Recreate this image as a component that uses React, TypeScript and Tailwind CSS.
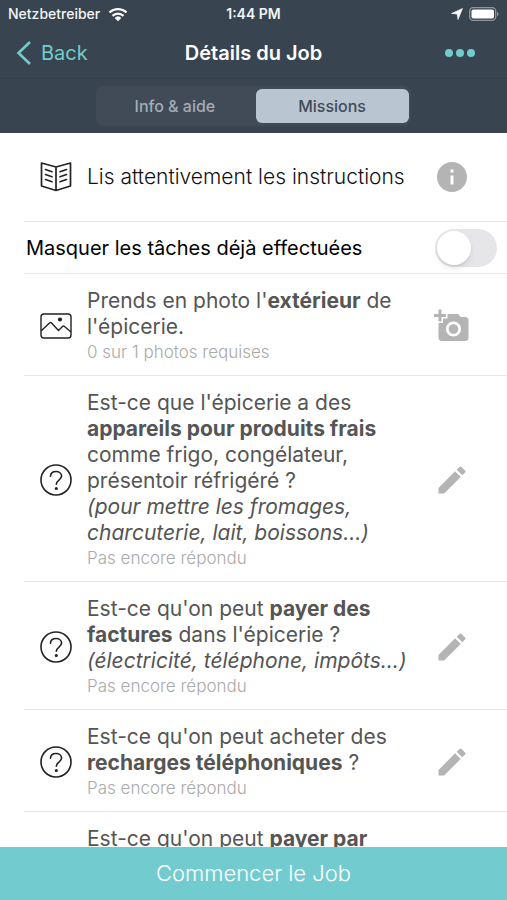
import React, { useState } from 'react';
import { MdAddAPhoto, MdEdit, MdInfo } from 'react-icons/md';

type Mission = {
  id: string;
  kind: 'photo' | 'question';
  text: React.ReactNode;
  status: string;
};

const missions: Mission[] = [
  {
    id: 'exterior',
    kind: 'photo',
    text: (
      <>
        Prends en photo l'<b>extérieur</b> de<br />
        l'épicerie.
      </>
    ),
    status: '0 sur 1 photos requises',
  },
  {
    id: 'fresh',
    kind: 'question',
    text: (
      <>
        Est-ce que l'épicerie a des<br />
        <b>appareils pour produits frais</b><br />
        comme frigo, congélateur,<br />
        présentoir réfrigéré ?<br />
        <i>(pour mettre les fromages,<br />charcuterie, lait, boissons...)</i>
      </>
    ),
    status: 'Pas encore répondu',
  },
  {
    id: 'bills',
    kind: 'question',
    text: (
      <>
        Est-ce qu'on peut <b>payer des<br />factures</b> dans l'épicerie ?<br />
        <i>(électricité, téléphone, impôts...)</i>
      </>
    ),
    status: 'Pas encore répondu',
  },
  {
    id: 'topup',
    kind: 'question',
    text: (
      <>
        Est-ce qu'on peut acheter des<br />
        <b>recharges téléphoniques</b> ?
      </>
    ),
    status: 'Pas encore répondu',
  },
  {
    id: 'card',
    kind: 'question',
    text: (
      <>
        Est-ce qu'on peut <b>payer par<br />carte</b> dans l'épicerie ?<br />
        <i>(crédit, débit...)</i>
      </>
    ),
    status: 'Pas encore répondu',
  },
];

const BookIcon = () => (
  <svg viewBox="0 0 32 32" className="size-8" fill="none" stroke="#222" strokeWidth="1.7" strokeLinecap="round" strokeLinejoin="round" aria-hidden="true">
    <path d="M16 6 1.500 2v23L16 29.500 30.500 25V2L16 6v23" />
    <path d="m5.500 8.500 6.500 2.200M5.500 13.500l6.500 2.200M5.500 18.500l6.500 2.200M26.500 8.500 20 10.700M26.500 13.500 20 15.700M26.500 18.500 20 20.700" />
  </svg>
);

const PictureIcon = () => (
  <svg viewBox="0 0 32 32" className="size-8" fill="none" stroke="#222" strokeWidth="1.4" strokeLinejoin="round" aria-hidden="true">
    <rect x="1" y="4" width="30" height="24" rx="3" />
    <path d="m1 21 8.500-8q1-1 2 0l7 7.500 4-4q1-1 2 0l6.500 5.500" />
    <circle cx="20" cy="9.500" r="1.400" fill="#222" />
  </svg>
);

const QuestionIcon = () => (
  <svg viewBox="0 0 32 32" className="size-8" fill="none" stroke="#222" strokeWidth="1.6" strokeLinecap="round" aria-hidden="true">
    <circle cx="16" cy="16" r="15" />
    <path d="M10.500 12.200c.2-2.900 2.500-4.700 5.500-4.700s5.600 1.900 5.600 4.600c0 3.900-5.300 4-5.300 8.200" />
    <circle cx="16.300" cy="24.500" r=".8" fill="#222" />
  </svg>
);

const StatusBar = () => (
  <div className="grid h-7 grid-cols-3 items-center px-2 text-sm text-gray-100">
    <div className="flex items-center gap-2">
      <span className="font-medium">Netzbetreiber</span>
      <svg viewBox="0 0 20 15" className="h-[15px] w-5 shrink-0" aria-hidden="true">
        <path d="M1.500 5.500a12.200 12.200 0 0 1 17 0M4.500 8.800a8 8 0 0 1 11 0" fill="none" stroke="#fff" strokeWidth="2.300" />
        <path d="M10 14.200 6.700 10.900a4.800 4.800 0 0 1 6.600 0Z" fill="#fff" />
      </svg>
    </div>
    <span className="text-center font-semibold">1:44 PM</span>
    <div className="flex items-center justify-end gap-1.5">
      <svg viewBox="0 0 12 12" className="size-3" fill="#fff" stroke="#fff" strokeWidth=".6" strokeLinejoin="round" aria-hidden="true">
        <path d="M11.500.5 7 11.500 6.200 6 .5 5.500Z" />
      </svg>
      <svg viewBox="0 0 30 14" className="h-3.5 w-[30px]" aria-hidden="true">
        <rect x=".7" y=".7" width="26" height="12.600" rx="3.500" fill="none" stroke="#8d969e" strokeWidth="1.300" />
        <rect x="2.500" y="2.500" width="22.500" height="9" rx="1.800" fill="#fff" />
        <path d="M28 4.800c2 .7 2 3.700 0 4.400Z" fill="#8d969e" />
      </svg>
    </div>
  </div>
);

const MissionRow: React.FC<{ mission: Mission }> = ({ mission }) => (
  <li className="ml-6 flex items-center border-b border-gray-200 pt-3.5 pb-[11px] pl-4 pr-[37px]">
    <span className="w-[47px] shrink-0">
      {mission.kind === 'photo' ? <PictureIcon /> : <QuestionIcon />}
    </span>
    <div className="min-w-0 flex-1 whitespace-nowrap">
      <p className="text-[21px] leading-[26px] text-[#555]">{mission.text}</p>
      <p className="text-[17px] leading-6 font-light text-[#aaa]">{mission.status}</p>
    </div>
    <button type="button" aria-label={mission.kind === 'photo' ? 'Ajouter une photo' : 'Répondre'} className="text-[#b4b4b4]">
      {mission.kind === 'photo' ? <MdAddAPhoto size={36} /> : <MdEdit size={36} />}
    </button>
  </li>
);

export default function App() {
  const [tab, setTab] = useState('missions');
  const [hideDone, setHideDone] = useState(false);

  const tabClass = (name: string) =>
    `flex-1 rounded-md text-base font-medium ${
      tab === name ? 'bg-[#b9c5d0] text-[#3f4b57]' : 'text-[#a3adb8]'
    }`;

  return (
    <div className="flex h-screen flex-col bg-white font-['Inter','Liberation_Sans',sans-serif]">
      <header className="shrink-0 bg-[#38444f]">
        <StatusBar />
        <nav className="grid h-[51px] grid-cols-[1fr_auto_1fr] items-center border-b border-[#34404a] px-4">
          <button type="button" className="flex items-center gap-2.5 text-xl text-[#72cccb]">
            <svg viewBox="0 0 15 24" className="h-6 w-[15px]" fill="none" stroke="currentColor" strokeWidth="2.600" aria-hidden="true">
              <path d="M14 1 2.500 12 14 23" />
            </svg>
            Back
          </button>
          <h1 className="text-xl font-semibold text-white">Détails du Job</h1>
          <button type="button" aria-label="Plus d'options" className="justify-self-end pr-4 text-[#72cccb]">
            <svg viewBox="0 0 30 8" className="h-2 w-[30px]" fill="currentColor" aria-hidden="true">
              <circle cx="4" cy="4" r="4" />
              <circle cx="15" cy="4" r="4" />
              <circle cx="26" cy="4" r="4" />
            </svg>
          </button>
        </nav>
        <div className="flex justify-center py-[7px]">
          <div role="tablist" className="flex h-10 w-[62%] gap-1 rounded-lg bg-[#404b57] px-0.5 py-[3px]">
            <button type="button" role="tab" aria-selected={tab === 'info'} onClick={() => setTab('info')} className={tabClass('info')}>
              Info &amp; aide
            </button>
            <button type="button" role="tab" aria-selected={tab === 'missions'} onClick={() => setTab('missions')} className={tabClass('missions')}>
              Missions
            </button>
          </div>
        </div>
      </header>

      <main className="min-h-0 flex-1 overflow-y-auto [scrollbar-width:none]">
        <div className="ml-6 flex h-[89px] items-center border-b border-gray-200 pl-4 pr-[37px]">
          <span className="w-[47px] shrink-0">
            <BookIcon />
          </span>
          <p className="flex-1 whitespace-nowrap text-[21px] font-light text-[#111]">Lis attentivement les instructions</p>
          <button type="button" aria-label="Informations" className="text-[#b4b4b4]">
            <MdInfo size={36} />
          </button>
        </div>

        <div className="ml-6 flex h-[52px] items-center justify-between border-b border-gray-200 pl-0.5 pr-2.5">
          <label htmlFor="hide-done" className="whitespace-nowrap text-xl text-black">
            Masquer les tâches déjà effectuées
          </label>
          <input
            id="hide-done"
            type="checkbox"
            role="switch"
            checked={hideDone}
            onChange={(e) => setHideDone(e.target.checked)}
            className="h-[38px] w-[62px] shrink-0 appearance-none rounded-full bg-[#e6e6e9] p-0.5 before:block before:size-[34px] before:rounded-full before:bg-white before:shadow-md before:transition-transform checked:bg-[#72cccb] checked:before:translate-x-6"
          />
        </div>

        <ul>
          {missions.map((mission) => (
            <MissionRow key={mission.id} mission={mission} />
          ))}
        </ul>
      </main>

      <button type="button" className="h-[53px] shrink-0 bg-[#72cccf] text-[22px] font-light text-white">
        Commencer le Job
      </button>
    </div>
  );
}
